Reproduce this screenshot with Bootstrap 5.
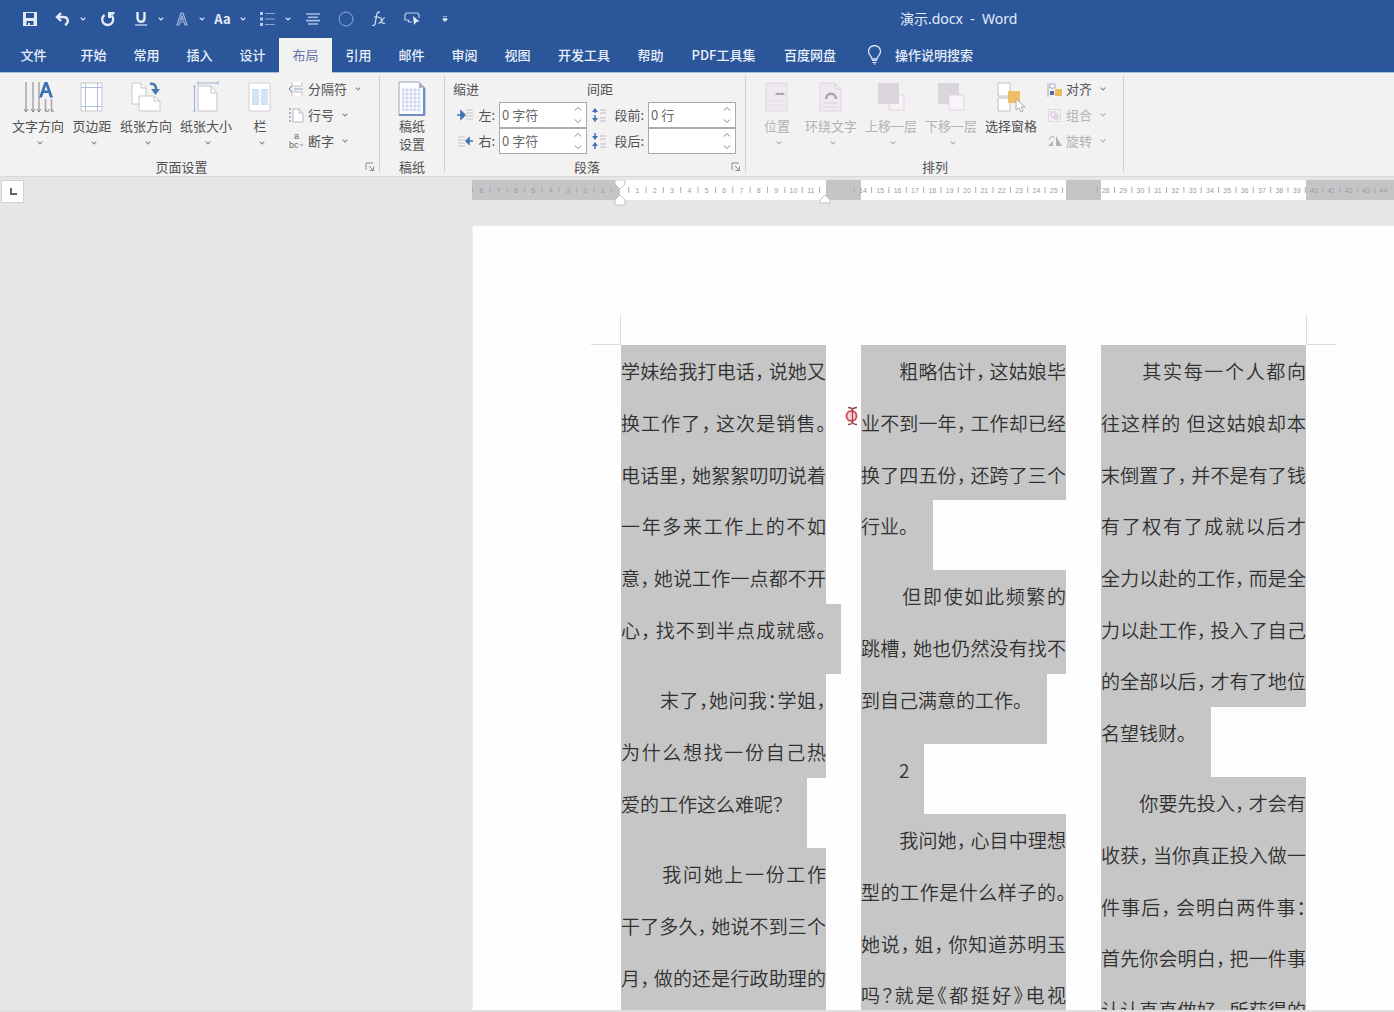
<!DOCTYPE html>
<html lang="zh-CN">
<head>
<meta charset="utf-8">
<meta name="viewport" content="width=device-width, initial-scale=1">
<title>演示.docx - Word</title>
<link href="https://cdn.jsdelivr.net/npm/bootstrap@5.3.0/dist/css/bootstrap.min.css" rel="stylesheet">
<style>
  body { font-family: "Noto Sans CJK SC", "Noto Sans", sans-serif; font-size: 13px; line-height: 18px; color: #505052; background: #e6e6e8; }
  button { font: inherit; color: inherit; background: none; border: 0; padding: 0; }
  svg { display: block; flex: none; }

  /* title bar and tabs */
  .app-head { background: #2b579a; color: #e4ebf8; border-bottom: 1px solid #a9bfe2; }
  .title-bar { height: 38px; padding-left: 15px; }
  .qat { gap: 4px; }
  .qat-main { width: 29px; height: 28px; display: flex; align-items: center; justify-content: center; }
  .qat-drop { width: 12px; height: 28px; display: flex; align-items: center; justify-content: center; }
  .doc-title { margin-left: 441px; font-family: "Noto Sans", "Noto Sans CJK SC", sans-serif; font-size: 14px; white-space: pre; }
  .tab-row { height: 34px; font-weight: 500; border-bottom: 1px solid #1d5ba6; }
  .tab-row a { width: 53px; height: 34px; line-height: 34px; text-align: center; color: #e9effa; text-decoration: none; white-space: nowrap; }
  .tab-row .tab-file { width: 67px; }
  .tab-row .tab-long { width: 80px; }
  .tab-row .tab-wide { width: 93px; }
  .tab-row .tab-on { background: #f3f2f3; color: #6272a6; font-weight: 400; height: 35px; margin-bottom: -2px; }
  .tell-me { margin-left: 17px; gap: 13px; }

  /* ribbon */
  .ribbon { background: #f3f2f3; height: 104px; border-bottom: 1px solid #d9d9db; }
  .rb-group { position: relative; border-right: 1px solid #d0d0d2; margin: 3px 0 4px; display: flex; flex-direction: column; }
  .rb-body { display: flex; height: 81px; flex: none; }
  .rb-name { text-align: center; height: 20px; line-height: 20px; flex: none; }
  .rb-launch { position: absolute; right: 4px; bottom: 0; }
  .rb-big { display: flex; flex-direction: column; align-items: center; padding-top: 5px; white-space: nowrap; width: 60px; }
  .rb-big svg:first-child { margin-bottom: 4px; }
  .rb-big .caret { margin-top: 6px; margin-left: 3px; }
  .rb-small { display: flex; align-items: center; height: 26px; gap: 4px; white-space: nowrap; }
  .rb-big .caret, .rb-small svg:last-child { color: #8a8a8e; }
  .rb-off { color: #b3b1b4; }
  .rb-big.rb-off .caret, .rb-small.rb-off svg:last-child { color: #b3b1b4; }
  .g-page { width: 380px; padding-left: 8px; }
  .g-grid { width: 65px; }
  .g-para { width: 301px; padding-left: 8px; }
  .g-arr { width: 378px; padding-left: 1px; }
  .w-head { width: 134px; }
  .w-side { width: 26px; }
  .w-seg { width: 41px; }
  .w-48 { width: 48px; }
  .w-56 { width: 56px; }
  .w-64 { width: 64px; }
  .field-row { display: flex; align-items: center; height: 26px; }
  .field-row label { text-align: right; padding-right: 4px; }
  .spin { display: flex; align-items: center; width: 88px; height: 26px; border: 1px solid #ababad; background: #fff; padding-right: 4px; }
  .spin input { border: 0; outline: 0; width: 100%; min-width: 0; padding: 0 2px; font-size: 13px; line-height: 18px; color: #666; background: none; }

  /* ruler and sheet */
  .ruler-row { height: 49px; padding-top: 3px; }
  .tab-kind { flex: none; width: 23px; height: 23px; margin-left: 1px; background: #fff; border: 1px solid #d2d2d4; display: flex; align-items: center; justify-content: center; }
  .ruler { margin-left: 448px; flex: 1 1 0; min-width: 0; overflow: hidden; }
  .sheet { margin-left: 472px; padding: 119px 0 0 149px; background: #fefefe; min-height: 0; overflow: hidden; border-left: 1px solid #efeff0; }
  .text-area { position: relative; display: grid; grid-template-columns: repeat(3, 205px); gap: 35px; width: 685px; margin-left: -1px; font-size: 19px; line-height: 52px; font-weight: 350; color: #303030; }
  .crop { position: absolute; width: 30px; height: 30px; top: -30px; border-bottom: 1px solid #dcdcdc; }
  .crop-l { left: -30px; border-right: 1px solid #dcdcdc; }
  .crop-r { right: -30px; border-left: 1px solid #dcdcdc; }
  .ln { display: block; background: #c6c6c6; height: 52px; text-align: justify; text-align-last: justify; font-feature-settings: "halt"; white-space: pre-wrap; }
  .ln:nth-child(3n) { height: 51px; }
  .ln-end { display: block; width: fit-content; height: 70px; padding-right: 15px; background: #c6c6c6; white-space: pre; }
  .ln-over { width: 220px; white-space: pre-wrap; text-align: justify; text-align-last: justify; font-feature-settings: "halt"; }
  .pause { margin-right: 4px; }
  .text-area p { margin: 0; }
  .pointer { position: absolute; left: 223px; top: 61px; }
  .foot-edge { height: 2px; background: #dedee0; flex: none; }
</style>
<script src="https://cdn.jsdelivr.net/npm/bootstrap@5.3.0/dist/js/bootstrap.bundle.min.js"></script>
</head>
<body class="vh-100 overflow-hidden d-flex flex-column">
<svg width="0" height="0" class="position-absolute" aria-hidden="true">
  <symbol id="dn" viewBox="0 0 6 4"><path d="M.7.7 3 3 5.3.7" fill="none" stroke="currentColor" stroke-width="1.1"/></symbol>
  <symbol id="spin" viewBox="0 0 8 20"><path d="M.7 5.500 4 2.500 7.300 5.500M.7 14.500 4 17.500 7.300 14.500" fill="none" stroke="#8d8d90"/></symbol>
  <symbol id="launch" viewBox="0 0 10 10"><path d="M1 8V1h7M4 4l4 4M8.500 4.500v4h-4" fill="none" stroke="#8a8a8c"/></symbol>
</svg>

<header class="app-head flex-shrink-0">
  <div class="title-bar d-flex align-items-center">
    <div class="qat d-flex align-items-center">
      <button class="qat-main" aria-label="保存"><svg width="14" height="14" viewBox="0 0 14 14"><path d="M0 0h14v14H0z" fill="#e4ebf8"/><path d="M3 1h8v5H3zM3.500 9h7v4h-7z" fill="#2b579a"/><path d="M5 11h2v2H5z" fill="#e4ebf8"/></svg></button>
      <div class="d-flex"><button class="qat-main" aria-label="撤消"><svg width="15" height="14" viewBox="0 0 15 14"><path d="M6 1 2 5l4 4M2.500 5H8c6 0 6 6 2 8" fill="none" stroke="#e4ebf8" stroke-width="2.400"/></svg></button><button class="qat-drop" aria-label="撤消列表"><svg width="6" height="4"><use href="#dn"/></svg></button></div>
      <button class="qat-main" aria-label="重复"><svg width="16" height="15" viewBox="0 0 16 15"><path d="M4.500 3a5.500 5.500 0 1 0 7 .5" fill="none" stroke="#e4ebf8" stroke-width="2.400"/><path d="M8 0h7l-1 2.500-3 .5v3H8z" fill="#e4ebf8"/></svg></button>
      <div class="d-flex">
        <button class="qat-main" aria-label="下划线"><svg width="12" height="14" viewBox="0 0 12 14"><path d="M2.500 0v6c0 5 7 5 7 0V0" fill="none" stroke="#e4ebf8" stroke-width="2.400"/><path d="M0 13h12" stroke="#b4c5e6" stroke-width="1.500"/></svg></button><button class="qat-drop" aria-label="下划线样式"><svg width="6" height="4"><use href="#dn"/></svg></button>
        <button class="qat-main" aria-label="文本效果"><svg width="12" height="14" viewBox="0 0 12 14"><path d="M1 13 5 1h2l4 12H9L8 10H4l-1 3zM4.600 8h2.800L6 4z" fill="none" stroke="#9fb3db" stroke-width="1.200"/></svg></button><button class="qat-drop" aria-label="文本效果列表"><svg width="6" height="4"><use href="#dn"/></svg></button>
        <button class="qat-main fw-bold" aria-label="更改大小写">Aa</button><button class="qat-drop" aria-label="大小写列表"><svg width="6" height="4"><use href="#dn"/></svg></button>
      </div>
      <div class="d-flex"><button class="qat-main" aria-label="项目符号"><svg width="15" height="14" viewBox="0 0 15 14"><path d="M0 0h3v3H0zM0 5.500h3v3H0zM0 11h3v3H0z" fill="#b9c9e8"/><path d="M5 1.500h10M5 7h10M5 12.500h10" stroke="#8ba5d6"/></svg></button><button class="qat-drop" aria-label="项目符号列表"><svg width="6" height="4"><use href="#dn"/></svg></button></div>
      <button class="qat-main" aria-label="居中"><svg width="14" height="12" viewBox="0 0 14 12"><path d="M0 1h14M2 4.300h10M0 7.600h14M2 11h10" stroke="#a9bbdf" stroke-width="1.600"/></svg></button>
      <button class="qat-main" aria-label="椭圆"><svg width="16" height="16" viewBox="0 0 16 16"><circle cx="8" cy="8" r="7" fill="none" stroke="#8da8d8"/></svg></button>
      <button class="qat-main" aria-label="公式"><svg width="14" height="16" viewBox="0 0 14 16"><path d="M8 1.500C6 0 5 2 4.500 5L3.300 12C3 14.500 1.500 15 .5 14M2 6h5M7 7c2-1 2 0 2.500 2.500S11 13 13 12M13 6.500C11 6.500 9 12.500 6.500 12.500" fill="none" stroke="#dce5f5" stroke-width="1.200"/></svg></button>
      <button class="qat-main" aria-label="选择"><svg width="16" height="14" viewBox="0 0 16 14"><path d="M8 10H4.500v-2H1V2.500L2.500 1h11L15 2.500V6" fill="none" stroke="#bccce9" stroke-width="1.200"/><path d="m9 4 6.500 5.500-3 .5L10 13z" fill="#e4ebf8"/></svg></button>
      <button class="qat-main" aria-label="自定义快速访问工具栏"><svg width="6" height="6" viewBox="0 0 6 6"><path d="M1 .5h4M1 2.500h4V4L3 5.500 1 4z" fill="#dce5f5" stroke="#dce5f5" stroke-width=".6"/></svg></button>
    </div>
    <div class="doc-title">演示.docx  -  Word</div>
  </div>
  <nav class="tab-row d-flex align-items-center">
    <a href="#" class="tab-file">文件</a><a href="#">开始</a><a href="#">常用</a><a href="#">插入</a><a href="#">设计</a><a href="#" class="tab-on" aria-current="page">布局</a><a href="#">引用</a><a href="#">邮件</a><a href="#">审阅</a><a href="#">视图</a><a href="#" class="tab-long">开发工具</a><a href="#">帮助</a><a href="#" class="tab-wide">PDF工具集</a><a href="#" class="tab-long">百度网盘</a>
    <button class="tell-me d-flex align-items-center"><svg width="15" height="20" viewBox="0 0 15 20"><path d="M5 14c0-3-3.500-4-3.500-7.500a6 6 0 0 1 12 0C13.500 10 10 11 10 14z" fill="none" stroke="#dce6f7" stroke-width="1.300"/><path d="M5 15.500h5M5.500 17.500h4M6.500 19h2" stroke="#dce6f7"/></svg>操作说明搜索</button>
  </nav>
</header>

<main class="flex-grow-1 d-flex flex-column overflow-hidden">
<div class="ribbon d-flex flex-shrink-0">
  <section class="rb-group g-page">
    <div class="rb-body">
      <button class="rb-big"><svg width="32" height="32" viewBox="0 0 32 32"><path d="M4 1v30M11 1v30M17 1v30M23.500 18v13M29.500 18v13" stroke="#aaa5aa" stroke-width="1.500"/><path d="m2 28 2 3 2-3m3 0 2 3 2-3m2 0 2 3 2-3m4.500 0 2 3 2-3m2 0 2 3 2-3" fill="none" stroke="#8b878b"/><path d="M17 16.500 22.500 1h3L31 16.500h-3L26.500 12h-5L20 16.500zM22.400 9.500h3.300L24 5z" fill="#3973af"/></svg>文字方向<svg class="caret" width="6" height="4"><use href="#dn"/></svg></button>
      <button class="rb-big w-48"><svg width="24" height="32" viewBox="0 0 24 32"><path d="M1 2h21v28H1z" fill="#fff" stroke="#c9c5cb"/><path d="M5.500 2v28M17.500 2v28M1 6.500h21M1 25.500h21" stroke="#aebfdd"/></svg>页边距<svg class="caret" width="6" height="4"><use href="#dn"/></svg></button>
      <button class="rb-big"><svg width="32" height="32" viewBox="0 0 32 32"><path d="M2 2h9l5 5v16H2z" fill="#fff" stroke="#c9c5cb"/><path d="M11 2v5h5M9 15h15l6 5v10H9z" fill="#fff" stroke="#c9c5cb"/><path d="M24 15v5h6" fill="none" stroke="#c9c5cb"/><path d="M20 3c5-1 6 2 6 6" fill="none" stroke="#4478ad" stroke-width="2.500"/><path d="M21 8h9l-4.500 6z" fill="#4478ad"/></svg>纸张方向<svg class="caret" width="6" height="4"><use href="#dn"/></svg></button>
      <button class="rb-big"><svg width="28" height="32" viewBox="0 0 28 32"><path d="M6 5h13l6 7v18H6z" fill="#fff" stroke="#c9c5cb"/><path d="M19 5v7h6" fill="none" stroke="#c9c5cb"/><path d="M6 2h20M6 0v4M26 0v4M2.500 5v25M1 5h3M1 30h3" stroke="#9eb3d8"/></svg>纸张大小<svg class="caret" width="6" height="4"><use href="#dn"/></svg></button>
      <button class="rb-big w-48"><svg width="24" height="32" viewBox="0 0 24 32"><path d="M1 2h21v28H1z" fill="#fff" stroke="#d2cdd3"/><path d="M4 8h7v16H4zM13 8h7v16h-7z" fill="#cfe0f3"/><path d="M4 11h16M4 14h16M4 17h16M4 20h16" stroke="#e0ebf8"/></svg>栏<svg class="caret" width="6" height="4"><use href="#dn"/></svg></button>
      <div class="ms-1">
        <button class="rb-small"><svg width="16" height="16" viewBox="0 0 16 16"><path d="M4 1v4h10V1M4 15v-4h10v4" fill="#fff" stroke="#c2bec4"/><path d="M6 8h9" stroke="#92a9cd"/><path d="M4 5 1 8l3 3" fill="none" stroke="#77757a"/></svg>分隔符<svg class="ms-1" width="6" height="4"><use href="#dn"/></svg></button>
        <button class="rb-small"><svg width="16" height="16" viewBox="0 0 16 16"><path d="M5 2h6l4 4v9H5z" fill="#fff" stroke="#b9b5bc"/><path d="M11 2v4h4" fill="none" stroke="#b9b5bc"/><path d="M2 1v15" stroke="#8b9cc6" stroke-width="1.500" stroke-dasharray="2 2"/></svg>行号<svg class="ms-1" width="6" height="4"><use href="#dn"/></svg></button>
        <button class="rb-small"><svg width="16" height="20" viewBox="0 0 16 20" font-family="Liberation Sans" font-size="9" fill="#666"><text x="6" y="8">a</text><text x="1" y="17">bc</text><path d="M12 14h3" stroke="#7289bd"/></svg>断字<svg class="ms-1" width="6" height="4"><use href="#dn"/></svg></button>
      </div>
    </div>
    <div class="rb-name pe-4">页面设置</div>
    <button class="rb-launch" aria-label="页面设置对话框"><svg width="10" height="10"><use href="#launch"/></svg></button>
  </section>

  <section class="rb-group g-grid">
    <div class="rb-body justify-content-center">
      <button class="rb-big"><svg class="mb-0" width="28" height="36" viewBox="0 0 28 36"><path d="M1 1h20l6 6v27H1z" fill="#fbfcff" stroke="#9aa3ba"/><path d="M26 7v27H1" fill="none" stroke="#6f8dc1" stroke-width="2"/><path d="M5 7v23M9 7v23M13 7v23M17 7v23M21 7v23M4 9h19M4 13h19M4 17h19M4 21h19M4 25h19M4 29h19" stroke="#c3cfe9"/><path d="M21 1v6h6z" fill="#aeb4c2"/></svg>稿纸<br>设置</button>
    </div>
    <div class="rb-name">稿纸</div>
  </section>

  <section class="rb-group g-para">
    <div class="rb-body flex-column">
      <div class="field-row"><span class="w-head">缩进</span><span>间距</span></div>
      <div class="field-row">
        <svg class="ms-1" width="16" height="14" viewBox="0 0 16 14"><path d="M9 2h7M9 5h7M9 8h7M9 11h7" stroke="#c9c4ca"/><path d="M0 7h6M4 3l4 4-4 4z" fill="#3f72b5" stroke="#3f72b5" stroke-width="1.500"/></svg>
        <label class="w-side" for="indL">左:</label><span class="spin"><input id="indL" value="0 字符"><svg width="8" height="20"><use href="#spin"/></svg></span>
        <svg class="ms-1" width="16" height="16" viewBox="0 0 16 16"><path d="M4 2v12" stroke="#3f72b5" stroke-width="1.500" stroke-dasharray="4 2"/><path d="m1 5 3-4 3 4zM1 11l3 4 3-4z" fill="#3f72b5"/><path d="M9 3h6M9 6h6M9 11h6M9 14h6" stroke="#c0bbc2"/></svg>
        <label class="w-seg" for="spB">段前:</label><span class="spin"><input id="spB" value="0 行"><svg width="8" height="20"><use href="#spin"/></svg></span>
      </div>
      <div class="field-row">
        <svg class="ms-1" width="16" height="14" viewBox="0 0 16 14"><path d="M1 3h7M1 6h7M1 9h7M1 12h7" stroke="#c9c4ca"/><path d="M16 7h-6M12 4 9 7l3 3z" fill="#3f72b5" stroke="#3f72b5" stroke-width="1.500"/></svg>
        <label class="w-side" for="indR">右:</label><span class="spin"><input id="indR" value="0 字符"><svg width="8" height="20"><use href="#spin"/></svg></span>
        <svg class="ms-1" width="16" height="16" viewBox="0 0 16 16"><path d="M4 0v16" stroke="#3f72b5" stroke-width="1.500" stroke-dasharray="6 4"/><path d="m1 3 3 4 3-4zM1 13l3-4 3 4z" fill="#3f72b5"/><path d="M9 3h6M9 6h6M9 11h6M9 14h6" stroke="#c0bbc2"/></svg>
        <label class="w-seg" for="spA">段后:</label><span class="spin"><input id="spA" value=""><svg width="8" height="20"><use href="#spin"/></svg></span>
      </div>
    </div>
    <div class="rb-name pe-4">段落</div>
    <button class="rb-launch" aria-label="段落对话框"><svg width="10" height="10"><use href="#launch"/></svg></button>
  </section>

  <section class="rb-group g-arr">
    <div class="rb-body">
      <button class="rb-big rb-off" disabled><svg width="24" height="32" viewBox="0 0 24 32"><path d="M1 2h21v28H1z" fill="#efe9f0" stroke="#e0d5e1"/><path d="M10 14c2-3 3-3 5-1 1-2 3-2 5 1z" fill="#aaa2ac"/><path d="M4 20h15M4 24h15" stroke="#e6dbe7"/></svg>位置<svg class="caret" width="6" height="4"><use href="#dn"/></svg></button>
      <button class="rb-big rb-off w-48" disabled><svg width="24" height="32" viewBox="0 0 24 32"><path d="M1 2h15l6 6v22H1z" fill="#efe9f0" stroke="#e0d5e1"/><path d="M16 2v6h6M4 22h15M4 26h15" fill="none" stroke="#ddd1de"/><path d="M7 18c0-7 10-7 10 0" fill="none" stroke="#aaa2ad" stroke-width="2.500"/></svg>环绕文字<svg class="caret" width="6" height="4"><use href="#dn"/></svg></button>
      <button class="rb-big rb-off w-64 ms-1" disabled><svg width="28" height="32" viewBox="0 0 28 32"><path d="M12 14h15v15H12z" fill="#f8f2f8" stroke="#dfd3e0"/><path d="M1 2h21v21H1z" fill="#dad5dc"/></svg>上移一层<svg class="caret" width="6" height="4"><use href="#dn"/></svg></button>
      <button class="rb-big rb-off w-56" disabled><svg width="28" height="32" viewBox="0 0 28 32"><path d="M1 2h21v21H1z" fill="#dad5dc"/><path d="M12 14h15v15H12z" fill="#faf3fa" stroke="#dfd3e0"/></svg>下移一层<svg class="caret" width="6" height="4"><use href="#dn"/></svg></button>
      <button class="rb-big w-64"><svg width="30" height="32" viewBox="0 0 30 32"><path d="M2 2h12v13H2zM2 17h12v13H2z" fill="#fff" stroke="#c3bec4"/><path d="M12 10h12v12H12z" fill="#edbf62"/><path d="m20 18 9 8h-4l2 4-2 1-2-4-3 2z" fill="#fff" stroke="#aaa8ae"/></svg>选择窗格</button>
      <div class="ms-1">
        <button class="rb-small"><svg width="15" height="15" viewBox="0 0 15 15"><path d="M1 1v14" stroke="#aaa7b2"/><path d="M3 2h5v4H3z" fill="#fff" stroke="#a5abbf"/><path d="M3 9h4v4H3z" fill="#4c6dac"/><path d="M8 7h7v7H8z" fill="#edbc60"/></svg>对齐<svg class="ms-1" width="6" height="4"><use href="#dn"/></svg></button>
        <button class="rb-small rb-off" disabled><svg width="15" height="15" viewBox="0 0 15 15"><path d="M1.500 1.500h12v12h-12z" fill="none" stroke="#d6cad7" stroke-dasharray="2 1"/><path d="M4 4h5v5H4zM7 7h4v4H7z" fill="none" stroke="#d6c5d8"/></svg>组合<svg class="ms-1" width="6" height="4"><use href="#dn"/></svg></button>
        <button class="rb-small rb-off" disabled><svg width="15" height="15" viewBox="0 0 15 15"><path d="M9 2v10h6zM1 12l5-5v5z" fill="#b5b0b8"/><path d="M2 6c1-4 4-4 6-2" fill="none" stroke="#aaa5ad"/></svg>旋转<svg class="ms-1" width="6" height="4"><use href="#dn"/></svg></button>
      </div>
    </div>
    <div class="rb-name">排列</div>
  </section>
</div>

<div class="ruler-row d-flex flex-shrink-0">
  <button class="tab-kind" aria-label="制表符"><svg width="8" height="8" viewBox="0 0 8 8"><path d="M2 0v6h6" fill="none" stroke="#666" stroke-width="2"/></svg></button>
  <div class="ruler"><svg id="ruler" width="1000" height="26" font-family="Liberation Sans" font-size="7" text-anchor="middle"></svg></div>
</div>

<div class="sheet flex-grow-1">
  <article class="text-area">
    <i class="crop crop-l"></i><i class="crop crop-r"></i>
    <div>
      <p><span class="ln">学妹给我打电话，说她又</span><span class="ln">换工作了，这次是销售。</span><span class="ln">电话里，她絮絮叨叨说着</span><span class="ln">一年多来工作上的不如</span><span class="ln">意，她说工作一点都不开</span><span class="ln-end ln-over">心，找不到半点成就感。</span></p>
      <p><span class="ln">　　末了，她问我：学姐，</span><span class="ln">为什么想找一份自己热</span><span class="ln-end">爱的工作这么难呢？</span></p>
      <p><span class="ln">　　我问她上一份工作</span><span class="ln">干了多久，她说不到三个</span><span class="ln">月，做的还是行政助理的</span><span class="ln"></span></p>
    </div>
    <div>
      <p><span class="ln">　　粗略估计，这姑娘毕</span><span class="ln">业不到一年，工作却已经</span><span class="ln">换了四五份，还跨了三个</span><span class="ln-end">行业。</span></p>
      <p><span class="ln">　　但即使如此频繁的</span><span class="ln">跳槽，她也仍然没有找不</span><span class="ln-end">到自己满意的工作。</span></p>
      <p><span class="ln-end">　　2</span></p>
      <p><span class="ln">　　我问她，心目中理想</span><span class="ln">型的工作是什么样子的。</span><span class="ln">她说，姐，你知道苏明玉</span><span class="ln">吗？就是《都挺好》电视</span></p>
    </div>
    <div>
      <p><span class="ln">　　其实每一个人都向</span><span class="ln">往这样的 但这姑娘却本</span><span class="ln">末倒置了，并不是有了钱</span><span class="ln">有了权有了成就以后才</span><span class="ln">全力以赴的工作，而是全</span><span class="ln">力以赴工作，投入了自己</span><span class="ln">的全部以后，才有了地位</span><span class="ln-end">名望钱财。</span></p>
      <p><span class="ln">　　你要先投入，才会有</span><span class="ln">收获，当你真正投入做一</span><span class="ln">件事后，会明白两件事：</span><span class="ln">首先你会明白，把一件事</span><span class="ln">认认真真做好，所获得的</span></p>
    </div>
    <svg class="pointer" width="16" height="20" viewBox="0 0 16 20"><circle cx="7.500" cy="10" r="5" fill="#f9d5d8" stroke="#d94f57" stroke-width="2"/><path d="M4 1.500c3 0 4 1 4.500 2 .5-1 1.500-2 4.500-2M8.500 3v14M4 18.500c3 0 4-1 4.500-2 .5 1 1.500 2 4.500 2" fill="none" stroke="#8a4b52" stroke-width="1.300"/></svg>
  </article>
</div>
<div class="foot-edge"></div>
</main>
<script>
  // Ruler: margins and column gaps are grey, one numbered unit per character width.
  const unit = 17.35, zero = 148;
  const grey = [[0, 148], [354, 389], [594, 629], [834, 1000]];
  let s = '<rect y="0" width="1000" height="20" fill="#fff"/>';
  grey.forEach(([a, b]) => s += `<rect x="${a}" width="${b - a}" height="20" fill="#c5c4c7"/>`);
  const hidden = n => n === 0 || n === 12 || n === 13 || n === 26 || n === 27;
  for (let n = -8; n <= 44; n++) {
    const x = zero + n * unit;
    if (!hidden(n)) s += `<text x="${x}" y="13" fill="#9c9b9f">${Math.abs(n)}</text>`;
    const t = x - unit / 2;
    if (n !== 13 && n !== 27) s += `<path d="M${t} 7v6" stroke="#adacb0"/>`;
  }
  s += '<path d="M143 0h10v4l-5 5-5-5zM143 25v-5l5-5 5 5v5zM348 23v-3l5-5 5 5v3z" fill="#fff" stroke="#c3c3c6"/>';
  document.getElementById('ruler').innerHTML = s;

  document.querySelectorAll('.ln, .ln-over').forEach(el => {
    if (/，$/.test(el.textContent)) return;
    el.innerHTML = el.textContent.replace(/，/g, '<span class="pause">，</span>');
  });
</script>
</body>
</html>
